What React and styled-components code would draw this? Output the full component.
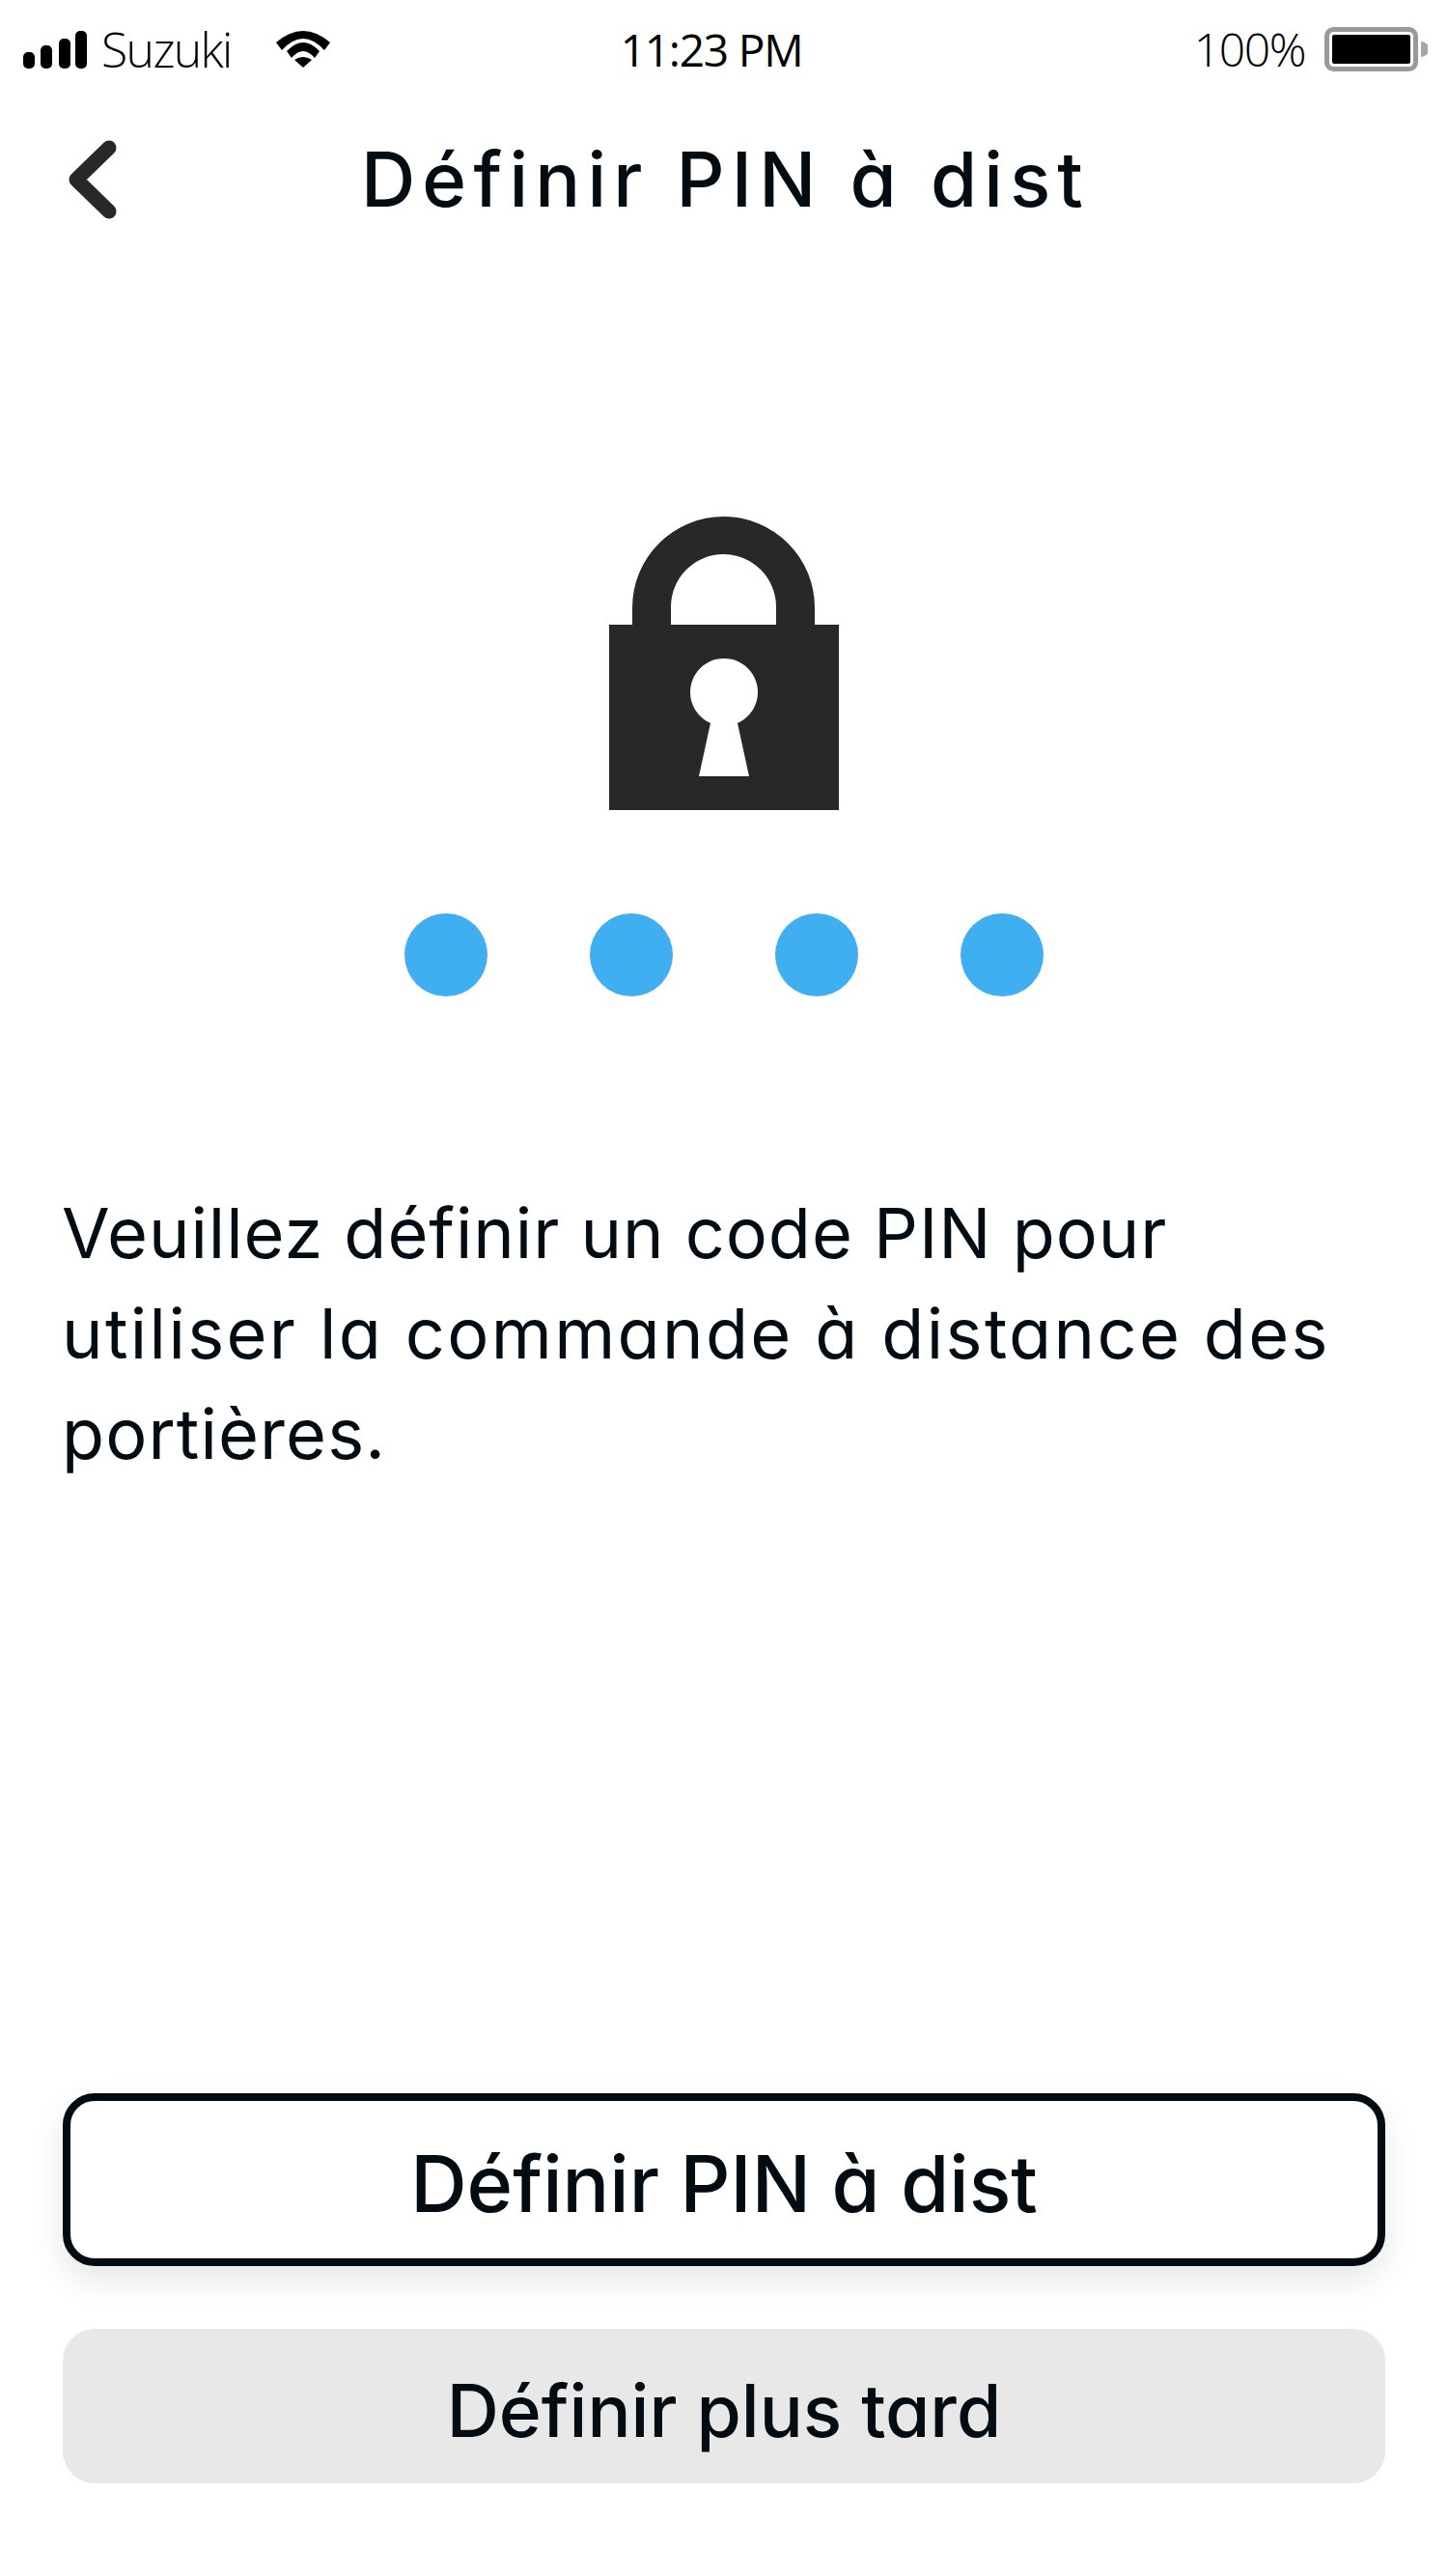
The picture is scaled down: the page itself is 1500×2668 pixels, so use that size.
import styled, { createGlobalStyle } from "styled-components";

const GlobalStyle = createGlobalStyle`
  html, body {
    margin: 0;
    padding: 0;
    background: #fff;
  }
  * {
    box-sizing: border-box;
  }
`;

const Screen = styled.div`
  width: 1500px;
  height: 2668px;
  display: flex;
  flex-direction: column;
  background: #fff;
  color: #020c12;
  font-family: Inter, "Open Sans", sans-serif;
  font-feature-settings: "cv11" 1;
`;

const StatusBar = styled.div`
  height: 100px;
  padding: 28px 21px 0 24px;
  display: grid;
  grid-template-columns: 1fr auto 1fr;
  align-items: flex-start;
  color: #000;
  font-family: "Open Sans", sans-serif;
  font-size: 46px;
  line-height: 46px;
`;

const StatusLeft = styled.div`
  display: flex;
  align-items: center;
  height: 46px;
`;

const Carrier = styled.span`
  margin-left: 15px;
  font-size: 50px;
  font-weight: 300;
  letter-spacing: -1.7px;
`;

const Wifi = styled.svg`
  margin-left: 46px;
`;

const Clock = styled.div`
  font-weight: 400;
  letter-spacing: -1.2px;
  margin-left: -29px;
`;

const StatusRight = styled.div`
  display: flex;
  align-items: center;
  justify-content: flex-end;
  gap: 20px;
  height: 46px;
  font-size: 48px;
  font-weight: 300;
  letter-spacing: -1.4px;
`;

const Header = styled.header`
  height: 172px;
  padding: 0 0 0 71px;
  display: grid;
  grid-template-columns: 1fr auto 1fr;
  align-items: center;
  margin-top: 1px;
`;

const BackIcon = styled.svg`
  display: block;
  margin-top: -2px;
`;

const Title = styled.h1`
  margin: -3px 68px 0 0;
  font-size: 78px;
  font-weight: 500;
  line-height: 90px;
  letter-spacing: 7.2px;
`;

const LockIcon = styled.svg`
  display: block;
  align-self: center;
  margin-top: 262px;
`;

const Dots = styled.div`
  margin-top: 107px;
  display: flex;
  justify-content: center;
  gap: 106px;
`;

const Dot = styled.span`
  width: 86px;
  height: 86px;
  border-radius: 50%;
  background: #40aff2;
`;

const Message = styled.p`
  margin: 193px 64px 0;
  font-size: 72px;
  font-weight: 400;
  line-height: 104px;
`;

const MessageLine = styled.span`
  display: block;
  letter-spacing: ${(p) => p.$spacing}px;
`;

const Actions = styled.div`
  margin-top: auto;
  padding: 0 65px 96px;
  display: flex;
  flex-direction: column;
  gap: 65px;
`;

const Button = styled.button`
  width: 100%;
  height: ${(p) => (p.$outlined ? "179px" : "160px")};
  border: ${(p) => (p.$outlined ? "8px solid #020c12" : "none")};
  border-radius: 33px;
  background: ${(p) => (p.$outlined ? "#fff" : "#e8e8e8")};
  box-shadow: ${(p) => (p.$outlined ? "0 14px 34px rgba(0, 0, 0, 0.1)" : "none")};
  color: #020c12;
  font-family: inherit;
  font-feature-settings: inherit;
  font-size: ${(p) => (p.$outlined ? "81px" : "75px")};
  font-weight: 500;
  padding: 8px 0 0;
`;

const App = () => {
  return (
    <Screen>
      <GlobalStyle />
      <StatusBar>
        <StatusLeft>
          <svg width="66" height="39" viewBox="0 0 66 39" fill="#000">
            <rect x="0" y="22" width="12" height="17" rx="5" />
            <rect x="18" y="15" width="12" height="24" rx="5" />
            <rect x="37" y="8" width="12" height="31" rx="5" />
            <rect x="54" y="0" width="12" height="39" rx="5" />
          </svg>
          <Carrier>Suzuki</Carrier>
          <Wifi width="56" height="38" viewBox="0 0 56 38" fill="#000">
            <path d="M0 12Q28-12 56 12L50 20Q28-4 6 20z" />
            <path d="M11 21Q28 3 45 21L40 28Q28 14 16 28z" />
            <path d="M19 30Q28 24 37 30L28 38z" />
          </Wifi>
        </StatusLeft>
        <Clock>11:23 PM</Clock>
        <StatusRight>
          <span>100%</span>
          <svg width="107" height="46" viewBox="0 0 107 46">
            <rect x="2.500" y="2.500" width="92" height="41" rx="7" fill="#fff" stroke="#999" strokeWidth="5" />
            <rect x="8" y="8" width="81" height="30" rx="2" fill="#000" />
            <path d="M100 15a8 8 0 0 1 0 16z" fill="#a6a6a6" />
          </svg>
        </StatusRight>
      </StatusBar>
      <Header>
        <BackIcon width="50" height="82" viewBox="0 0 50 82" fill="none" stroke="#282828" strokeWidth="15" strokeLinecap="round" strokeLinejoin="round">
          <path d="M42 8 8 41l34 33" />
        </BackIcon>
        <Title>Définir PIN à dist</Title>
      </Header>
      <LockIcon width="238" height="304" viewBox="0 0 238 304">
        <path
          fill="#282828"
          fillRule="evenodd"
          d="M24 112V94.500a94.500 94.500 0 0 1 189 0V112h25v192H0V112zM64 112h109V93.500a54.500 54.500 0 0 0-109 0zM105 214 93 269h52l-12-55a35 35 0 1 0-28 0z"
        />
      </LockIcon>
      <Dots>
        {[0, 1, 2, 3].map((i) => (
          <Dot key={i} />
        ))}
      </Dots>
      <Message>
        <MessageLine $spacing={0.95}>Veuillez définir un code PIN pour</MessageLine>
        <MessageLine $spacing={2.35}>utiliser la commande à distance des</MessageLine>
        <MessageLine $spacing={1.1}>portières.</MessageLine>
      </Message>
      <Actions>
        <Button $outlined>Définir PIN à dist</Button>
        <Button>Définir plus tard</Button>
      </Actions>
    </Screen>
  );
};

export default App;
